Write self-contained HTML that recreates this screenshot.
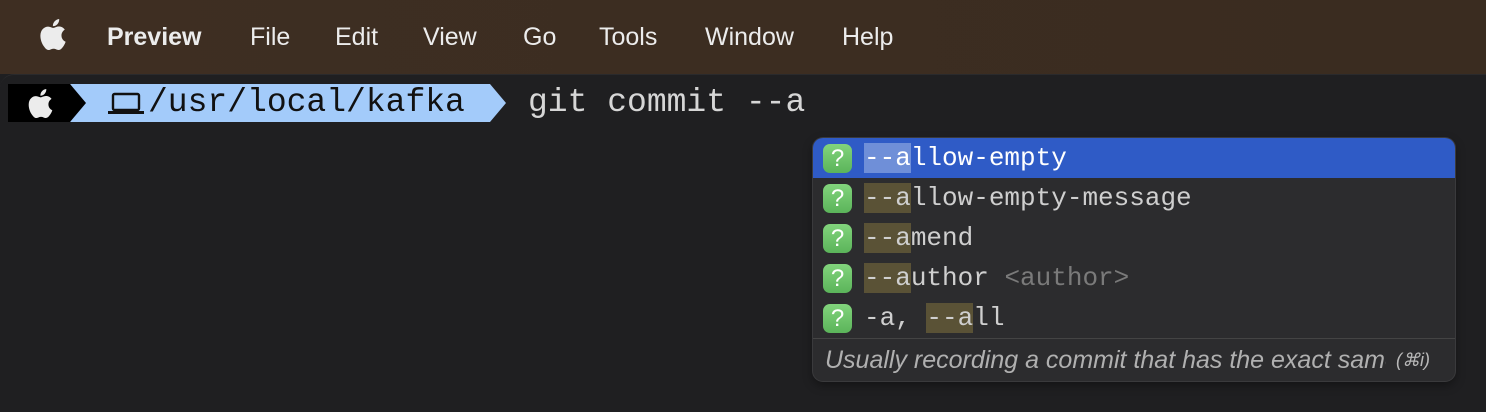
<!DOCTYPE html>
<html><head><meta charset="utf-8"><style>
*{margin:0;padding:0;box-sizing:border-box}
body{width:1486px;height:412px;overflow:hidden;background:#1f1f21;position:relative;font-family:"Liberation Sans",sans-serif}
.menubar{position:absolute;left:0;top:0;width:1486px;height:74px;background:linear-gradient(90deg,#3e2e22,#3a2c20);}
.mi{position:absolute;top:22px;font-size:25px;line-height:30px;color:#ececec;}
.term{position:absolute;left:0;top:74px;width:1486px;height:338px;background:#1f1f21;border-top-left-radius:14px;border-top:1px solid #2a2a2c}
.mono{font-family:"Liberation Mono","DejaVu Sans Mono",monospace}
.seg1{position:absolute;left:8px;top:84px;width:62px;height:38px;background:#000}
.seg2{position:absolute;left:70px;top:84px;height:38px;width:436px;background:#a3cbfa;clip-path:polygon(0 0,420px 0,436px 19px,420px 38px,0 38px,14px 19px)}
.arrow1{position:absolute;left:70px;top:84px;width:16px;height:38px;background:#000;clip-path:polygon(0 0,100% 50%,0 100%)}
.path{position:absolute;left:148px;top:84px;font-size:33px;line-height:38px;color:#111}
.cmd{position:absolute;left:528px;top:84px;font-size:33px;line-height:38px;color:#d6d6d6}
.pop{position:absolute;left:813px;top:138px;width:642px;height:243px;background:#2c2c2e;border-radius:10px;box-shadow:0 0 0 1px #3a3a3c,0 4px 10px rgba(0,0,0,.4)}
.row{position:absolute;left:0;width:642px;height:40px}
.row.sel{background:#2f5bc6;border-radius:10px 10px 0 0}
.q{position:absolute;left:10px;top:6px;width:29px;height:29px;border-radius:7px;background:linear-gradient(#82d47c,#5bb45a);color:#fff;font-size:24px;line-height:29px;text-align:center;font-family:"Liberation Sans",sans-serif}
.t{position:absolute;left:51px;top:0;font-size:26px;line-height:40px;color:#cfcfcf;white-space:pre}
.sel .t{color:#fff}
.hl{background:#5a5236}
.sel .hl{background:#6f8fd8}
.dim{color:#7a7a7a}
.sep{position:absolute;left:0;top:200px;width:642px;height:1px;background:#444}
.foot{position:absolute;left:12px;top:205px;font-size:25px;line-height:34px;color:#b0b0b0;font-style:italic;white-space:nowrap}
.kbd{position:absolute;left:583px;top:210px;font-size:18px;line-height:24px;color:#b8b8b8;font-style:italic}
</style></head><body>
<div class="menubar">
<svg style="position:absolute;left:40px;top:19px" width="26" height="31" viewBox="0 0 814 1000"><path fill="#ececec" d="M788.1 340.9c-5.8 4.5-108.2 62.2-108.2 190.5 0 148.4 130.3 200.9 134.2 202.2-.6 3.2-20.7 71.9-68.7 141.9-42.8 61.6-87.5 123.1-155.5 123.1s-85.5-39.5-164-39.5c-76.5 0-103.7 40.8-165.9 40.8s-105.6-57-155.5-127C46.7 790.7 0 663 0 541.8c0-194.4 126.4-297.5 250.8-297.5 66.1 0 121.2 43.4 162.7 43.4 39.5 0 101.1-46 176.3-46 28.5 0 130.9 2.6 198.3 99.2zm-234-181.5c31.1-36.9 53.1-88.1 53.1-139.3 0-7.1-.6-14.3-1.9-20.1-50.6 1.9-110.8 33.7-147.1 75.8-28.5 32.4-55.1 83.6-55.1 135.5 0 7.8 1.3 15.6 1.9 18.1 3.2.6 8.4 1.3 13.6 1.3 45.4 0 102.5-30.4 136.5-71.3z"/></svg>
<div class="mi" style="left:107px;font-weight:bold">Preview</div>
<div class="mi" style="left:250px">File</div>
<div class="mi" style="left:335px">Edit</div>
<div class="mi" style="left:423px">View</div>
<div class="mi" style="left:523px">Go</div>
<div class="mi" style="left:599px">Tools</div>
<div class="mi" style="left:705px">Window</div>
<div class="mi" style="left:842px">Help</div>
</div>
<div class="term"></div>
<div class="seg1"></div>
<div class="seg2"></div>
<div class="arrow1"></div>
<svg style="position:absolute;left:28px;top:89px" width="25" height="29" viewBox="0 0 814 1000"><path fill="#ececec" d="M788.1 340.9c-5.8 4.5-108.2 62.2-108.2 190.5 0 148.4 130.3 200.9 134.2 202.2-.6 3.2-20.7 71.9-68.7 141.9-42.8 61.6-87.5 123.1-155.5 123.1s-85.5-39.5-164-39.5c-76.5 0-103.7 40.8-165.9 40.8s-105.6-57-155.5-127C46.7 790.7 0 663 0 541.8c0-194.4 126.4-297.5 250.8-297.5 66.1 0 121.2 43.4 162.7 43.4 39.5 0 101.1-46 176.3-46 28.5 0 130.9 2.6 198.3 99.2zm-234-181.5c31.1-36.9 53.1-88.1 53.1-139.3 0-7.1-.6-14.3-1.9-20.1-50.6 1.9-110.8 33.7-147.1 75.8-28.5 32.4-55.1 83.6-55.1 135.5 0 7.8 1.3 15.6 1.9 18.1 3.2.6 8.4 1.3 13.6 1.3 45.4 0 102.5-30.4 136.5-71.3z"/></svg>
<svg style="position:absolute;left:108px;top:92px" width="36" height="24" viewBox="0 0 36 24"><rect x="5" y="2" width="26" height="16" rx="1.5" fill="none" stroke="#111" stroke-width="2.4"/><rect x="0" y="19" width="36" height="3" fill="#111"/></svg>
<div class="path mono">/usr/local/kafka</div>
<div class="cmd mono">git commit --a</div>
<div class="pop">
<div class="row sel" style="top:0"><div class="q">?</div><div class="t mono"><span class="hl">--a</span>llow-empty</div></div>
<div class="row" style="top:40px"><div class="q">?</div><div class="t mono"><span class="hl">--a</span>llow-empty-message</div></div>
<div class="row" style="top:80px"><div class="q">?</div><div class="t mono"><span class="hl">--a</span>mend</div></div>
<div class="row" style="top:120px"><div class="q">?</div><div class="t mono"><span class="hl">--a</span>uthor <span class="dim">&lt;author&gt;</span></div></div>
<div class="row" style="top:160px"><div class="q">?</div><div class="t mono">-a, <span class="hl">--a</span>ll</div></div>
<div class="sep"></div>
<div class="foot" style="width:561px;overflow:hidden">Usually recording a commit that has the exact same</div>
<div class="kbd">(⌘i)</div>
</div>
</body></html>
